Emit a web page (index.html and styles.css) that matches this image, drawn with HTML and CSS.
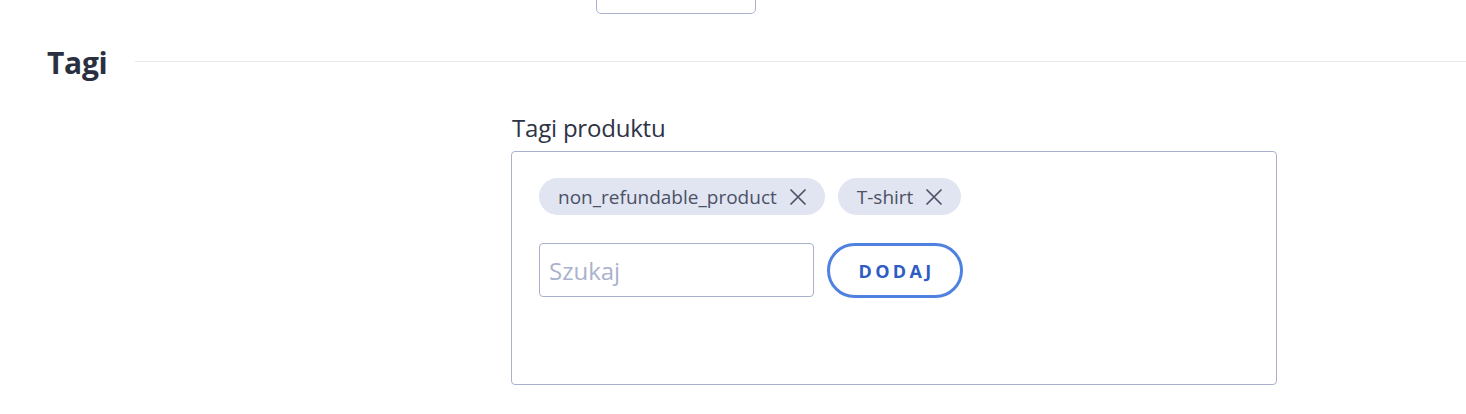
FILE: index.html
```html
<!DOCTYPE html>
<html lang="pl">
<head>
<meta charset="utf-8">
<title>Tagi</title>
<link rel="stylesheet" href="styles.css">
</head>
<body>
<div class="page">
  <div class="prev-row">
    <div class="prev-box"></div>
  </div>
  <div class="section-head">
    <h2 class="section-title">Tagi</h2>
    <div class="section-line"></div>
  </div>
  <div class="field">
    <label class="field-label">Tagi produktu</label>
    <div class="tag-box">
      <div class="chips">
        <span class="chip">non_refundable_product
          <svg class="chip-x" viewBox="0 0 16 16" width="16" height="16"><path d="M1 1 L15 15 M15 1 L1 15" stroke="#4b5166" stroke-width="1.7" fill="none" stroke-linecap="round"/></svg>
        </span>
        <span class="chip">T-shirt
          <svg class="chip-x" viewBox="0 0 16 16" width="16" height="16"><path d="M1 1 L15 15 M15 1 L1 15" stroke="#4b5166" stroke-width="1.7" fill="none" stroke-linecap="round"/></svg>
        </span>
      </div>
      <div class="add-row">
        <input class="search" type="text" placeholder="Szukaj">
        <button class="add-btn" type="button">DODAJ</button>
      </div>
    </div>
  </div>
</div>
</body>
</html>
```
FILE: styles.css
```css
* { box-sizing: border-box; }
html, body { margin: 0; padding: 0; background: #fff; }
body {
  font-family: "Open Sans", "Liberation Sans", sans-serif;
  color: #2b3142;
}
.page { width: 1466px; height: 414px; overflow: hidden; }
.prev-row { display: flow-root; height: 14px; padding-left: 596px; }
.prev-box {
  width: 160px;
  height: 24px;
  margin-top: -10px;
  border: 1px solid #a9b1cf;
  border-radius: 5px;
}
.section-head {
  display: flex;
  align-items: center;
  padding-left: 47px;
  margin-top: 27px;
  height: 40px;
}
.section-title {
  margin: 0;
  padding-top: 4px;
  font-size: 30px;
  font-weight: 700;
  color: #2a3040;
  line-height: 40px;
  letter-spacing: -0.3px;
}
.section-line {
  flex: 1;
  height: 1px;
  background: #e8e9ee;
  margin-left: 28px;
}
.field { padding-left: 511px; margin-top: 32px; }
.field-label {
  display: block;
  font-size: 24px;
  line-height: 30px;
  color: #2d3345;
  padding-left: 1px;
  margin-bottom: 8px;
  letter-spacing: -0.2px;
}
.tag-box {
  width: 766px;
  height: 234px;
  border: 1px solid #a9b1cf;
  border-radius: 4px;
  padding: 26px 27px;
}
.chips { display: flex; gap: 13px; }
.chip {
  display: inline-flex;
  align-items: center;
  height: 37px;
  padding: 0 19px 0 19px;
  border-radius: 19px;
  background: #e1e5f1;
  font-size: 19px;
  color: #4b5166;
  gap: 13px;
}
.chip-x { display: block; }
.add-row { display: flex; gap: 13px; margin-top: 28px; }
.search {
  width: 275px;
  height: 54px;
  border: 1px solid #a9b1cf;
  border-radius: 4px;
  padding: 0 9px;
  font-family: inherit;
  font-size: 24px;
  color: #2b3142;
  outline: none;
}
.search::placeholder { color: #aab2cd; }
.add-btn {
  width: 136px;
  height: 55px;
  border: 3px solid #4f82e0;
  border-radius: 28px;
  background: #fff;
  font-family: inherit;
  font-size: 18px;
  font-weight: 700;
  letter-spacing: 3.3px;
  color: #2f5bc4;
  padding: 0 0 0 3px;
}
```
